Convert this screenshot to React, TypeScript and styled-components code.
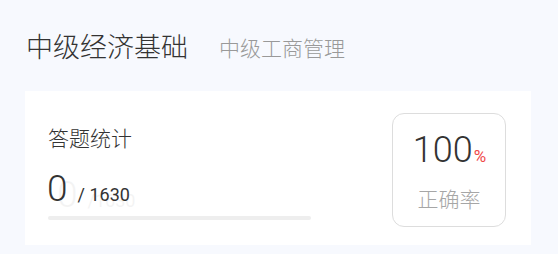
import React from "react";
import styled, { createGlobalStyle } from "styled-components";

const Global = createGlobalStyle`
  html, body { margin: 0; padding: 0; background: #f7f9fe; }
  body { font-family: Roboto, "Noto Sans CJK SC", sans-serif; }
`;

const Page = styled.div`
  width: 558px;
  height: 254px;
  background: #f7f9fe;
  display: flex;
  flex-direction: column;
  padding: 0 27px 0 25px;
  box-sizing: border-box;
`;

const Header = styled.div`
  height: 91px;
  display: flex;
  align-items: center;
  padding-left: 1px;
  gap: 31px;
`;

const Title = styled.div`
  font-family: "Noto Sans CJK SC", sans-serif;
  font-size: 27px;
  font-weight: 300;
  color: #333;
  line-height: 36px;
`;

const SubTitle = styled.div`
  font-family: "Noto Sans CJK SC", sans-serif;
  font-size: 21px;
  font-weight: 300;
  color: #999;
  line-height: 36px;
  padding-top: 2px;
`;

const Card = styled.div`
  background: #fff;
  height: 154px;
  display: flex;
  justify-content: space-between;
  padding: 0 25px 0 22px;
  box-sizing: border-box;
`;

const Stats = styled.div`
  display: flex;
  flex-direction: column;
  padding-top: 32px;
  position: relative;
`;

const Label = styled.div`
  font-family: "Noto Sans CJK SC", sans-serif;
  font-size: 21px;
  font-weight: 300;
  line-height: 28px;
  color: #333;
  padding-left: 1px;
`;

const CountRow = styled.div`
  margin-top: 18px;
  display: flex;
  align-items: baseline;
  height: 40px;
  line-height: 40px;
  color: #333;
  font-family: Roboto, sans-serif;
`;

const Big = styled.span`
  font-size: 37px;
  font-weight: 300;
`;

const Total = styled.span`
  font-size: 18px;
  margin-left: 10px;
`;

const Ghost = styled.div`
  position: absolute;
  left: 10px;
  top: 84px;
  display: flex;
  align-items: baseline;
  height: 40px;
  line-height: 40px;
  color: #333;
  opacity: 0.05;
  font-family: Roboto, sans-serif;
  pointer-events: none;
`;

const Bar = styled.div`
  margin-top: 7px;
  width: 263px;
  height: 4px;
  background: #eeeeee;
  border-radius: 2px;
  margin-left: 1px;
`;

const RateBox = styled.div`
  margin-top: 22px;
  width: 114px;
  height: 114px;
  box-sizing: border-box;
  border: 1px solid #dddddd;
  border-radius: 12px;
  display: flex;
  flex-direction: column;
  align-items: center;
  padding-top: 16px;
  gap: 8px;
`;

const RateValue = styled.div`
  font-family: Roboto, sans-serif;
  font-size: 36px;
  font-weight: 300;
  line-height: 40px;
  color: #333;
  display: flex;
  align-items: baseline;
  padding-left: 1px;
`;

const Percent = styled.span`
  font-size: 17px;
  font-weight: 400;
  color: #f04a4a;
  margin-left: 1px;
`;

const RateLabel = styled.div`
  font-family: "Noto Sans CJK SC", sans-serif;
  font-size: 21px;
  font-weight: 300;
  line-height: 28px;
  color: #a6a6a6;
`;

export default function App() {
  return (
    <>
      <Global />
      <Page>
        <Header>
          <Title>中级经济基础</Title>
          <SubTitle>中级工商管理</SubTitle>
        </Header>
        <Card>
          <Stats>
            <Label>答题统计</Label>
            <CountRow>
              <Big>0</Big>
              <Total>/ 1630</Total>
            </CountRow>
            <Ghost>
              <Big>0</Big>
              <Total>/1630</Total>
            </Ghost>
            <Bar />
          </Stats>
          <RateBox>
            <RateValue>
              100<Percent>%</Percent>
            </RateValue>
            <RateLabel>正确率</RateLabel>
          </RateBox>
        </Card>
      </Page>
    </>
  );
}
